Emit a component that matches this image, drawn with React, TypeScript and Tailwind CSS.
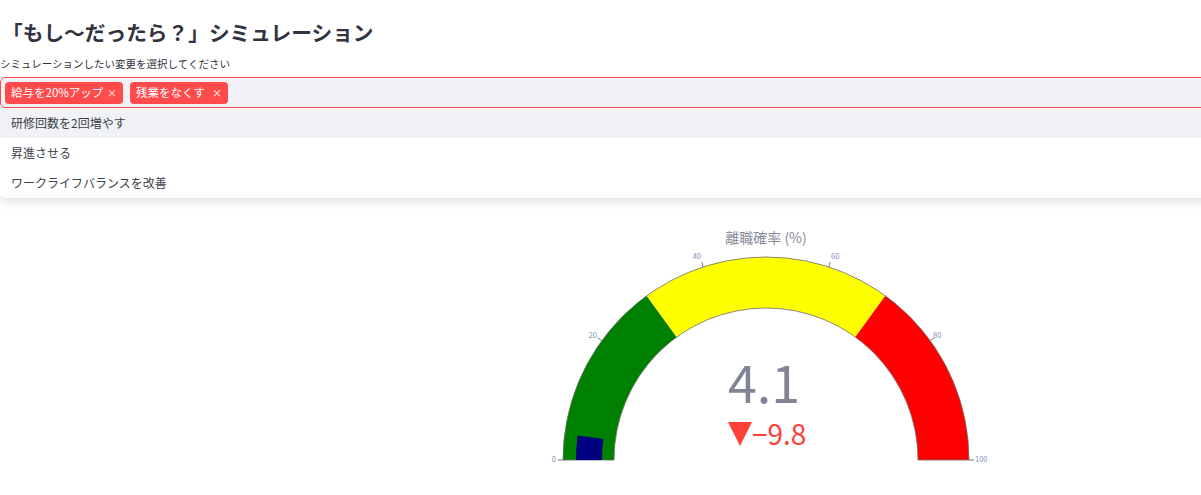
import React from "react";

const CX = 766;
const CY = 240;
const R = 203;
const r = 152;

function pt(v: number, rad: number) {
  const a = Math.PI * (1 - v / 100);
  return [CX + rad * Math.cos(a), CY - rad * Math.sin(a)];
}

function band(v1: number, v2: number, ro: number, ri: number) {
  const [x1, y1] = pt(v1, ro);
  const [x2, y2] = pt(v2, ro);
  const [x3, y3] = pt(v2, ri);
  const [x4, y4] = pt(v1, ri);
  return `M${x1} ${y1} A${ro} ${ro} 0 0 1 ${x2} ${y2} L${x3} ${y3} A${ri} ${ri} 0 0 0 ${x4} ${y4} Z`;
}

const ticks = [
  { v: 0, x: 556, y: 240, anchor: "end" },
  { v: 20, x: 597, y: 116, anchor: "end" },
  { v: 40, x: 701, y: 37, anchor: "end" },
  { v: 60, x: 831, y: 37, anchor: "start" },
  { v: 80, x: 933, y: 116, anchor: "start" },
  { v: 100, x: 975, y: 240, anchor: "start" },
];

function Gauge() {
  return (
    <svg width={1201} height={265} viewBox="0 0 1201 265" className="block">
      <text
        x={CX}
        y={19}
        textAnchor="middle"
        dominantBaseline="middle"
        fontSize={14}
        fill="#878b99"
        fontFamily="'Noto Sans CJK JP', 'Noto Sans', sans-serif"
      >
        離職確率 (%)
      </text>
      <path d={band(0, 30, R, r)} fill="#008000" />
      <path d={band(30, 70, R, r)} fill="#ffff00" />
      <path d={band(70, 100, R, r)} fill="#ff0000" />
      <path d={band(0, 100, R, r)} fill="none" stroke="#6b6b6b" strokeWidth={0.8} />
      <path d={band(0, 4.1, 190, 164)} fill="#000080" />
      {ticks.map((t) => {
        const [x1, y1] = pt(t.v, R);
        const [x2, y2] = pt(t.v, R + 5);
        return (
          <g key={t.v}>
            <line x1={x1} y1={y1} x2={x2} y2={y2} stroke="#555" strokeWidth={0.8} />
            <text
              x={t.x}
              y={t.y}
              textAnchor={t.anchor as "start" | "end"}
              dominantBaseline="middle"
              fontSize={7.5}
              fill="#7d8fb3"
              fontFamily="'Noto Sans CJK JP', 'Noto Sans', sans-serif"
            >
              {t.v}
            </text>
          </g>
        );
      })}
      <text
        x={CX - 2}
        y={183}
        textAnchor="middle"
        fontSize={52}
        fill="#808495"
        fontFamily="'Noto Sans CJK JP', 'Noto Sans', sans-serif"
      >
        4.1
      </text>
      <polygon points="728,202 752,202 740,226" fill="#ff4136" />
      <text
        x={752}
        y={225}
        textAnchor="start"
        fontSize={28}
        fill="#ff4136"
        fontFamily="'Noto Sans CJK JP', 'Noto Sans', sans-serif"
      >
        −9.8
      </text>
    </svg>
  );
}

function Tag({ label, w }: { label: string; w: string }) {
  return (
    <div className={`flex h-[22px] items-center justify-between rounded-[4px] bg-[#ff4b4b] pl-[6px] pr-[6px] text-[11.5px] text-white ${w}`}>
      <span>{label}</span>
      <span className="text-[10px]">×</span>
    </div>
  );
}

export default function App() {
  return (
    <div
      className="relative h-[495px] w-[1201px] overflow-hidden bg-white text-[#31333f]"
      style={{ fontFamily: "'Noto Sans CJK JP', 'Noto Sans', sans-serif" }}
    >
      <h1 className="pl-[2px] pt-[18px] text-[20.7px] font-bold leading-[28px] text-[#31333f]">
        「もし〜だったら？」シミュレーション
      </h1>
      <div className="mt-[10px] text-[10.5px] leading-[16px]">シミュレーションしたい変更を選択してください</div>
      <div className="relative mt-[5px]">
        <div className="flex h-[31px] w-[1210px] items-center gap-[7px] rounded-l-[5px] border border-[#ff4b4b] bg-[#f0f2f6] pl-[4px]">
          <Tag label="給与を20%アップ" w="w-[118px]" />
          <Tag label="残業をなくす" w="w-[98px]" />
        </div>
        <div className="absolute left-0 top-[31px] z-10 w-[1210px] rounded-b-[5px] bg-white text-[12px] text-[#3d3f4b] shadow-[0_4px_10px_rgba(0,0,0,0.12)]">
          <div className="flex h-[30px] items-center bg-[#f0f2f6] pl-[11px]">研修回数を2回増やす</div>
          <div className="flex h-[30px] items-center pl-[11px]">昇進させる</div>
          <div className="flex h-[30px] items-center pl-[11px]">ワークライフバランスを改善</div>
        </div>
      </div>
      <div className="mt-[112px]">
        <Gauge />
      </div>
    </div>
  );
}
